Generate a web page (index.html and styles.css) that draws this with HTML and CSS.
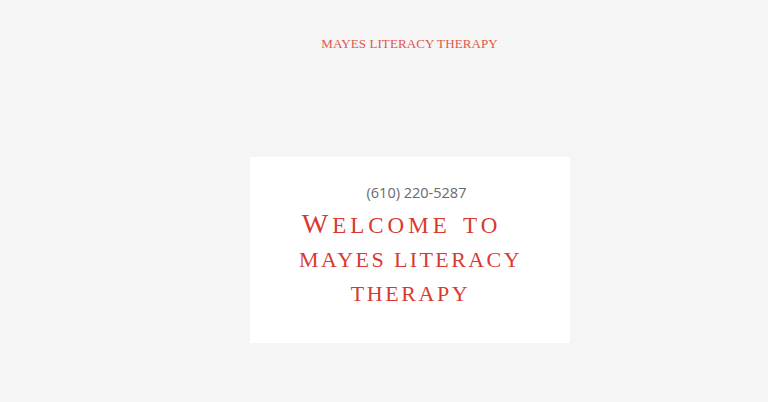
FILE: index.html
```html
<!DOCTYPE html>
<html lang="en">
<head>
<meta charset="utf-8">
<title>Mayes Literacy Therapy</title>
<link rel="stylesheet" href="styles.css">
</head>
<body>
<div class="page">
  <header class="site-header">
    <a class="brand" href="#">MAYES LITERACY THERAPY</a>
  </header>
  <main class="hero">
    <section class="card">
      <p class="phone">(610) 220-5287</p>
      <h1 class="title"><span class="line line-1"><span class="cap">W</span>elcome to</span><span class="line line-2">mayes literacy</span><span class="line line-3">therapy</span></h1>
    </section>
  </main>
</div>
</body>
</html>
```
FILE: styles.css
```css
html, body {
  margin: 0;
  padding: 0;
  background: #f5f5f5;
}
.page {
  width: 768px;
  height: 402px;
  box-sizing: border-box;
  padding-left: 51px;
  display: flex;
  flex-direction: column;
  align-items: center;
}
.site-header {
  padding-top: 34px;
  height: 157px;
  box-sizing: border-box;
}
.brand {
  font-family: "Liberation Serif", serif;
  font-size: 13px;
  letter-spacing: 0.1px;
  color: #e0564c;
  text-decoration: none;
}
.hero {
  display: flex;
  justify-content: center;
}
.card {
  width: 320px;
  height: 186px;
  background: #ffffff;
  box-sizing: border-box;
  padding-top: 26px;
  text-align: center;
}
.phone {
  margin: 0;
  padding-left: 14px;
  font-family: "Open Sans", sans-serif;
  font-size: 14.5px;
  line-height: 19px;
  color: #686b70;
  letter-spacing: 0;
}
.title {
  margin: 5px 0 0;
  font-family: "Liberation Serif", serif;
  font-weight: normal;
  text-transform: uppercase;
  font-size: 22px;
  line-height: 34px;
  color: #d93a2f;
}
.line {
  display: block;
}
.line-1 {
  font-size: 23px;
  letter-spacing: 4px;
  word-spacing: 3px;
  padding-right: 16px;
}
.cap {
  font-size: 28px;
}
.line-2 {
  letter-spacing: 2.4px;
  padding-left: 2px;
}
.line-3 {
  letter-spacing: 2.6px;
  padding-left: 2px;
}
```
